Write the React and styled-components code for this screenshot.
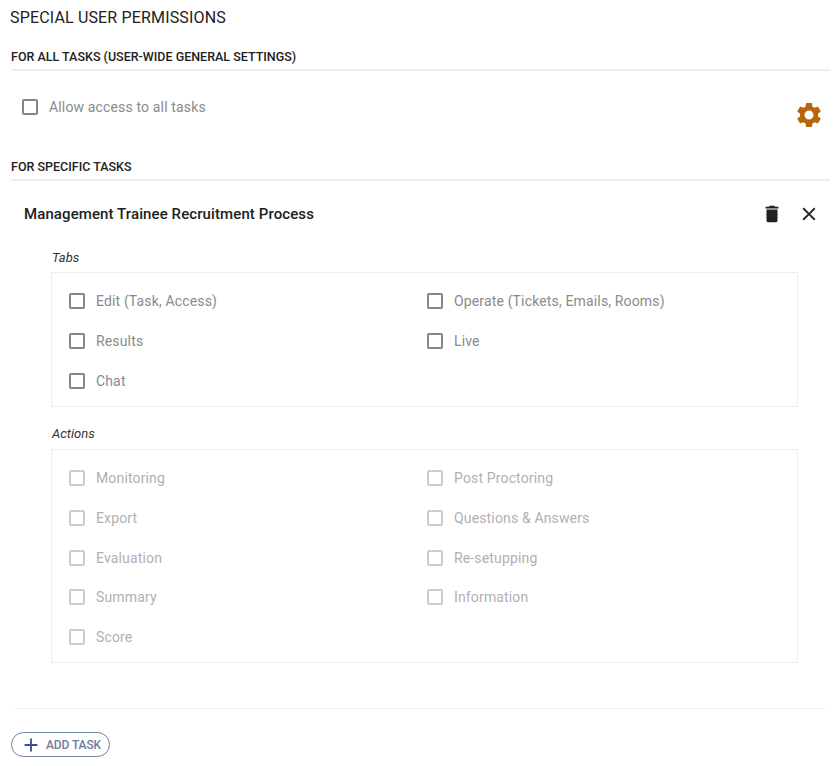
import React from "react"
import styled, { createGlobalStyle } from "styled-components"
import { MdSettings, MdDelete, MdClose, MdAdd } from "react-icons/md"

const tabs = ["Edit (Task, Access)", "Operate (Tickets, Emails, Rooms)", "Results", "Live", "Chat"]
const actions = [
  "Monitoring",
  "Post Proctoring",
  "Export",
  "Questions & Answers",
  "Evaluation",
  "Re-setupping",
  "Summary",
  "Information",
  "Score",
]

const App = () => {
  return (
    <Page>
      <GlobalStyle />
      <Title>SPECIAL USER PERMISSIONS</Title>

      <SectionLabel>FOR ALL TASKS (USER-WIDE GENERAL SETTINGS)</SectionLabel>
      <GeneralRow>
        <CheckRow>
          <Box />
          <CheckText>Allow access to all tasks</CheckText>
        </CheckRow>
        <GearButton>
          <MdSettings size={30} />
        </GearButton>
      </GeneralRow>

      <SectionLabel>FOR SPECIFIC TASKS</SectionLabel>
      <TaskHeader>
        <TaskName>Management Trainee Recruitment Process</TaskName>
        <TaskTools>
          <MdDelete size={22} />
          <MdClose size={22} />
        </TaskTools>
      </TaskHeader>

      <GroupLabel>Tabs</GroupLabel>
      <Panel>
        {tabs.map((item) => (
          <CheckRow key={item}>
            <Box />
            <CheckText>{item}</CheckText>
          </CheckRow>
        ))}
      </Panel>

      <GroupLabel $compact>Actions</GroupLabel>
      <Panel>
        {actions.map((item) => (
          <CheckRow key={item}>
            <Box $disabled />
            <CheckText $disabled>{item}</CheckText>
          </CheckRow>
        ))}
      </Panel>

      <BottomRule />
      <AddButton>
        <MdAdd size={22} />
        ADD TASK
      </AddButton>
    </Page>
  )
}

export default App

const GlobalStyle = createGlobalStyle`
  body {
    margin: 0;
    background: #fff;
    font-family: Roboto, "Liberation Sans", sans-serif;
  }
`

const Page = styled.div`
  width: 838px;
  height: 766px;
  box-sizing: border-box;
  padding: 8px 8px 0 11px;
  overflow: hidden;
`

const Title = styled.div`
  margin: 0 0 21px -1px;
  font-size: 16px;
  letter-spacing: 0.16px;
  line-height: 19px;
  color: #212121;
`

const SectionLabel = styled.div`
  margin-top: 14px;
  padding: 1px 0 4px;
  border-bottom: 2px solid #eeeeee;
  font-size: 12.5px;
  font-weight: 500;
  line-height: 16px;
  color: #212121;
`

const GeneralRow = styled.div`
  display: flex;
  justify-content: space-between;
  align-items: flex-start;
  height: 73px;
  padding: 16px 6px 0 11px;
  box-sizing: border-box;
`

const CheckRow = styled.label`
  display: flex;
  align-items: center;
  gap: 11px;
  height: 39.67px;
`

const Box = styled.span`
  width: 16px;
  height: 16px;
  box-sizing: border-box;
  border: 2px solid ${(p) => (p.$disabled ? "#cdcdd1" : "#85858c")};
  border-radius: 2px;
  flex: none;
`

const CheckText = styled.span`
  font-size: 14px;
  letter-spacing: 0.15px;
  color: ${(p) => (p.$disabled ? "#b0b0b4" : "#8a8a8e")};
`

const GearButton = styled.div`
  display: flex;
  color: #b8660b;
  margin-top: 13px;
`

const TaskHeader = styled.div`
  display: flex;
  justify-content: space-between;
  align-items: center;
  height: 24px;
  margin-top: 21px;
  padding: 0 10px 0 13px;
`

const TaskName = styled.div`
  font-size: 15px;
  font-weight: 500;
  letter-spacing: 0.1px;
  color: #212121;
`

const TaskTools = styled.div`
  display: flex;
  gap: 15px;
  color: #212121;
`

const GroupLabel = styled.div`
  margin: ${(p) => (p.$compact ? "19px 0 8px 41px" : "24px 0 7px 41px")};
  font-size: 13px;
  font-style: italic;
  line-height: 15px;
  color: #333333;
`

const Panel = styled.div`
  display: grid;
  grid-template-columns: 358px 1fr;
  margin: 0 32px 0 40px;
  padding: 8.5px 17px 5.5px;
  border: 1px solid #eeeeee;
`

const BottomRule = styled.div`
  margin: 45px 5px 0 4px;
  border-top: 1px solid #eeeeee;
`

const AddButton = styled.button`
  display: flex;
  align-items: center;
  gap: 4px;
  width: 99px;
  height: 25px;
  margin-top: 23px;
  padding: 0 0 0 8px;
  box-sizing: border-box;
  border: 1px solid #6e819f;
  border-radius: 13px;
  background: #fff;
  font-family: Roboto, "Liberation Sans", sans-serif;
  font-size: 12px;
  font-weight: 500;
  letter-spacing: -0.1px;
  color: #6f7c99;
  svg {
    color: #3b4f8c;
  }
`
